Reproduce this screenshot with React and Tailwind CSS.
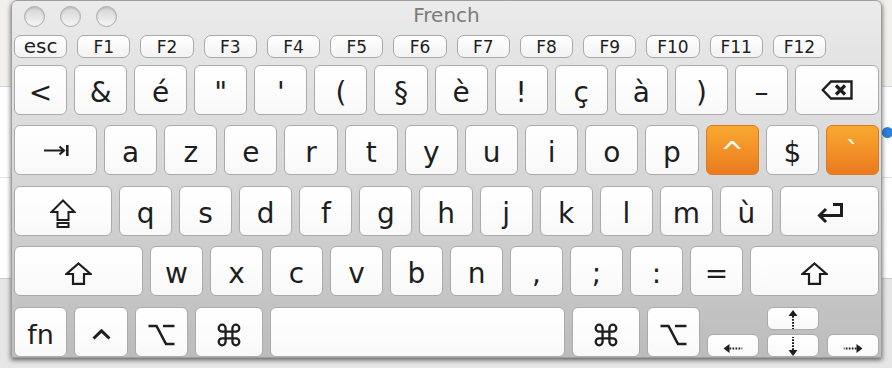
import React from 'react'

const font = { fontFamily: '"DejaVu Sans", "Liberation Sans", sans-serif' }

const Key = ({ children, className = '' }) => (
  <div
    className={`flex items-center justify-center rounded-[6px] border border-[#ababab] bg-gradient-to-b from-white to-[#f9f9f9] text-[#1e1e1e] ${className}`}
  >
    {children}
  </div>
)

const CharKey = ({ ch }) => (
  <Key className="flex-1 h-full pt-[5px] text-[28px] leading-none">{ch}</Key>
)

const OrangeKey = ({ ch }) => (
  <div className="flex-1 h-full flex items-center justify-center pt-[5px] rounded-[6px] border border-[#d97a24] bg-gradient-to-b from-[#f9a930] to-[#ea7a1f] text-white text-[28px] leading-none">
    {ch}
  </div>
)

const FKey = ({ label, esc }) => (
  <div
    className={`flex items-end justify-center pb-[1px] rounded-[7px] border border-[#a9a9a9] bg-gradient-to-b from-white to-[#f3f3f3] text-[#1e1e1e] leading-none ${esc ? 'text-[20px]' : 'text-[17px]'}`}
  >
    {label}
  </div>
)

const Stroke = ({ w, h, vb, children, sw = 2.2 }) => (
  <svg width={w} height={h} viewBox={vb} fill="none" stroke="#1e1e1e" strokeWidth={sw} strokeLinejoin="miter">
    {children}
  </svg>
)

const BackspaceIcon = () => (
  <Stroke w={32} h={20} vb="0 0 32 20" sw={2.4}>
    <path d="M10 1.5 H30.5 V18.5 H10 L1.8 10 Z" />
    <path d="M15 5.5 L24 14.5 M24 5.5 L15 14.5" strokeWidth={3.2} />
  </Stroke>
)

const TabIcon = () => (
  <svg width={26} height={11} viewBox="0 0 26 11">
    <path d="M1 5.5 H21 M16.5 1.5 L21 5.5 L16.5 9.5" stroke="#1e1e1e" strokeWidth={2.2} fill="none" />
    <rect x={23} y={0} width={2.6} height={11} fill="#1e1e1e" />
  </svg>
)

const CapsIcon = () => (
  <Stroke w={26} h={29} vb="0 0 26 29" sw={2}>
    <path d="M13 1.5 L24.5 13 H18.5 V21 H7.5 V13 H1.5 Z" />
    <rect x={7.5} y={24} width={11} height={4} />
  </Stroke>
)

const ShiftIcon = () => (
  <Stroke w={27} h={23} vb="0 0 27 23" sw={2.2}>
    <path d="M13.5 1.5 L25.5 12 H19 V21.8 H8 V12 H1.5 Z" />
  </Stroke>
)

const ReturnIcon = () => (
  <Stroke w={28} h={22} vb="0 0 28 22" sw={3}>
    <path d="M17 2.5 H25.5 V13.5 H4" />
    <path d="M10 7 L3.5 13.5 L10 20" />
  </Stroke>
)

const CtrlIcon = () => (
  <Stroke w={19} h={11} vb="0 0 19 11" sw={3}>
    <path d="M1.5 9.5 L9.5 1.8 L17.5 9.5" />
  </Stroke>
)

const OptionIcon = () => (
  <Stroke w={27} h={22} vb="0 0 27 22" sw={2.6}>
    <path d="M0.5 2 H8.5 L18 20 H26.5 M15 2 H26.5" />
  </Stroke>
)

const CmdIcon = () => (
  <Stroke w={26} h={24} vb="1.5 1.5 21 21" sw={2}>
    <path d="M9 9 V6 A3 3 0 1 0 6 9 H18 A3 3 0 1 0 15 6 V18 A3 3 0 1 0 18 15 H6 A3 3 0 1 0 9 18 V9" />
  </Stroke>
)

const ArrowIcon = ({ dir }) => {
  const rot = { up: 0, down: 180, left: 270, right: 90 }[dir]
  return (
    <svg width={10} height={19} viewBox="0 0 10 19" style={{ transform: `rotate(${rot}deg)` }}>
      <path d="M5 0 L9.5 6 H0.5 Z" fill="#1e1e1e" />
      <path d="M5 6 V19" stroke="#1e1e1e" strokeWidth={2} strokeDasharray="1.7 1.3" />
    </svg>
  )
}

const Light = () => (
  <div className="w-[21px] h-[21px] rounded-full border border-[#acacac] bg-gradient-to-b from-[#d4d4d4] to-[#f6f6f6] shadow-[inset_0_1px_2px_rgba(0,0,0,0.15)]" />
)

export default function App() {
  const fkeys = ['F1', 'F2', 'F3', 'F4', 'F5', 'F6', 'F7', 'F8', 'F9', 'F10', 'F11', 'F12']
  const row1 = ['<', '&', 'é', '"', "'", '(', '§', 'è', '!', 'ç', 'à', ')', '–']
  const row2 = ['a', 'z', 'e', 'r', 't', 'y', 'u', 'i', 'o', 'p']
  const row3 = ['q', 's', 'd', 'f', 'g', 'h', 'j', 'k', 'l', 'm', 'ù']
  const row4 = ['w', 'x', 'c', 'v', 'b', 'n', ',', ';', ':', '=']

  return (
    <div className="relative w-[892px] h-[368px] overflow-hidden bg-[#ebebeb]" style={font}>
      {/* desktop behind the window */}
      <div className="flex flex-col h-full">
        <div className="h-[87px] bg-[#f1f0ec] border-b border-[#d4d4d4]" />
        <div className="h-[91px] bg-white border-b border-[#e2e2e2]" />
        <div className="h-[101px] bg-white border-b border-[#cccccc]" />
        <div className="flex-1 bg-[#e6e6e6]" />
      </div>
      <div className="absolute left-[882px] top-[127px] w-[11px] h-[11px] rounded-full bg-[#2b80d6]" />

      {/* keyboard viewer window */}
      <div className="absolute left-[11px] top-0 w-[871px] h-[358px] flex flex-col rounded-t-[6px] border border-[#9e9e9e] bg-gradient-to-b from-[#ebebeb] via-[#d6d6d6] to-[#bcbcbc] shadow-[0_2px_5px_rgba(0,0,0,0.6)]">
        <div className="relative h-[34px] flex items-center">
          <div className="flex items-center gap-[15px] pl-[12px] -mt-[4px]">
            <Light />
            <Light />
            <Light />
          </div>
          <div className="absolute inset-x-0 top-[4px] text-center text-[20px] leading-none text-[#7b7b7b]">
            French
          </div>
        </div>

        <div className="flex flex-col px-[2px]">
          <div className="grid grid-cols-13 gap-[10px] w-[812px] h-[20px]">
            <FKey label="esc" esc />
            {fkeys.map((f) => (
              <FKey key={f} label={f} />
            ))}
          </div>

          <div className="flex gap-[7px] h-[50px] mt-[10px]">
            {row1.map((c, i) => (
              <CharKey key={i} ch={c} />
            ))}
            <Key className="w-[84px] h-full">
              <BackspaceIcon />
            </Key>
          </div>

          <div className="flex gap-[7px] h-[50px] mt-[10px]">
            <Key className="w-[83px] h-full">
              <TabIcon />
            </Key>
            {row2.map((c) => (
              <CharKey key={c} ch={c} />
            ))}
            <OrangeKey ch="^" />
            <CharKey ch="$" />
            <OrangeKey ch="`" />
          </div>

          <div className="flex gap-[7px] h-[50px] mt-[11px]">
            <Key className="w-[98px] h-full pt-[4px]">
              <CapsIcon />
            </Key>
            {row3.map((c) => (
              <CharKey key={c} ch={c} />
            ))}
            <Key className="w-[99px] h-full pt-[4px]">
              <ReturnIcon />
            </Key>
          </div>

          <div className="flex gap-[7px] h-[50px] mt-[10px]">
            <Key className="w-[129px] h-full pt-[4px]">
              <ShiftIcon />
            </Key>
            {row4.map((c, i) => (
              <CharKey key={i} ch={c} />
            ))}
            <Key className="w-[129px] h-full pt-[4px]">
              <ShiftIcon />
            </Key>
          </div>

          <div className="flex gap-[7px] h-[50px] mt-[11px]">
            <Key className="w-[53px] h-full pt-[4px] text-[27px] leading-none">fn</Key>
            <Key className="w-[54px] h-full pt-[4px]">
              <CtrlIcon />
            </Key>
            <Key className="w-[53px] h-full pt-[6px]">
              <OptionIcon />
            </Key>
            <Key className="w-[68px] h-full pt-[6px]">
              <CmdIcon />
            </Key>
            <Key className="w-[295px] h-full" />
            <Key className="w-[68px] h-full pt-[6px]">
              <CmdIcon />
            </Key>
            <Key className="w-[53px] h-full pt-[6px]">
              <OptionIcon />
            </Key>
            <div className="flex-1 grid grid-cols-3 grid-rows-2 gap-x-[8px] gap-y-[4px]">
              <div />
              <Key className="pt-[1px]">
                <ArrowIcon dir="up" />
              </Key>
              <div />
              <Key className="pt-[6px]">
                <ArrowIcon dir="left" />
              </Key>
              <Key className="pt-[2px]">
                <ArrowIcon dir="down" />
              </Key>
              <Key className="pt-[6px]">
                <ArrowIcon dir="right" />
              </Key>
            </div>
          </div>
        </div>
      </div>
    </div>
  )
}
